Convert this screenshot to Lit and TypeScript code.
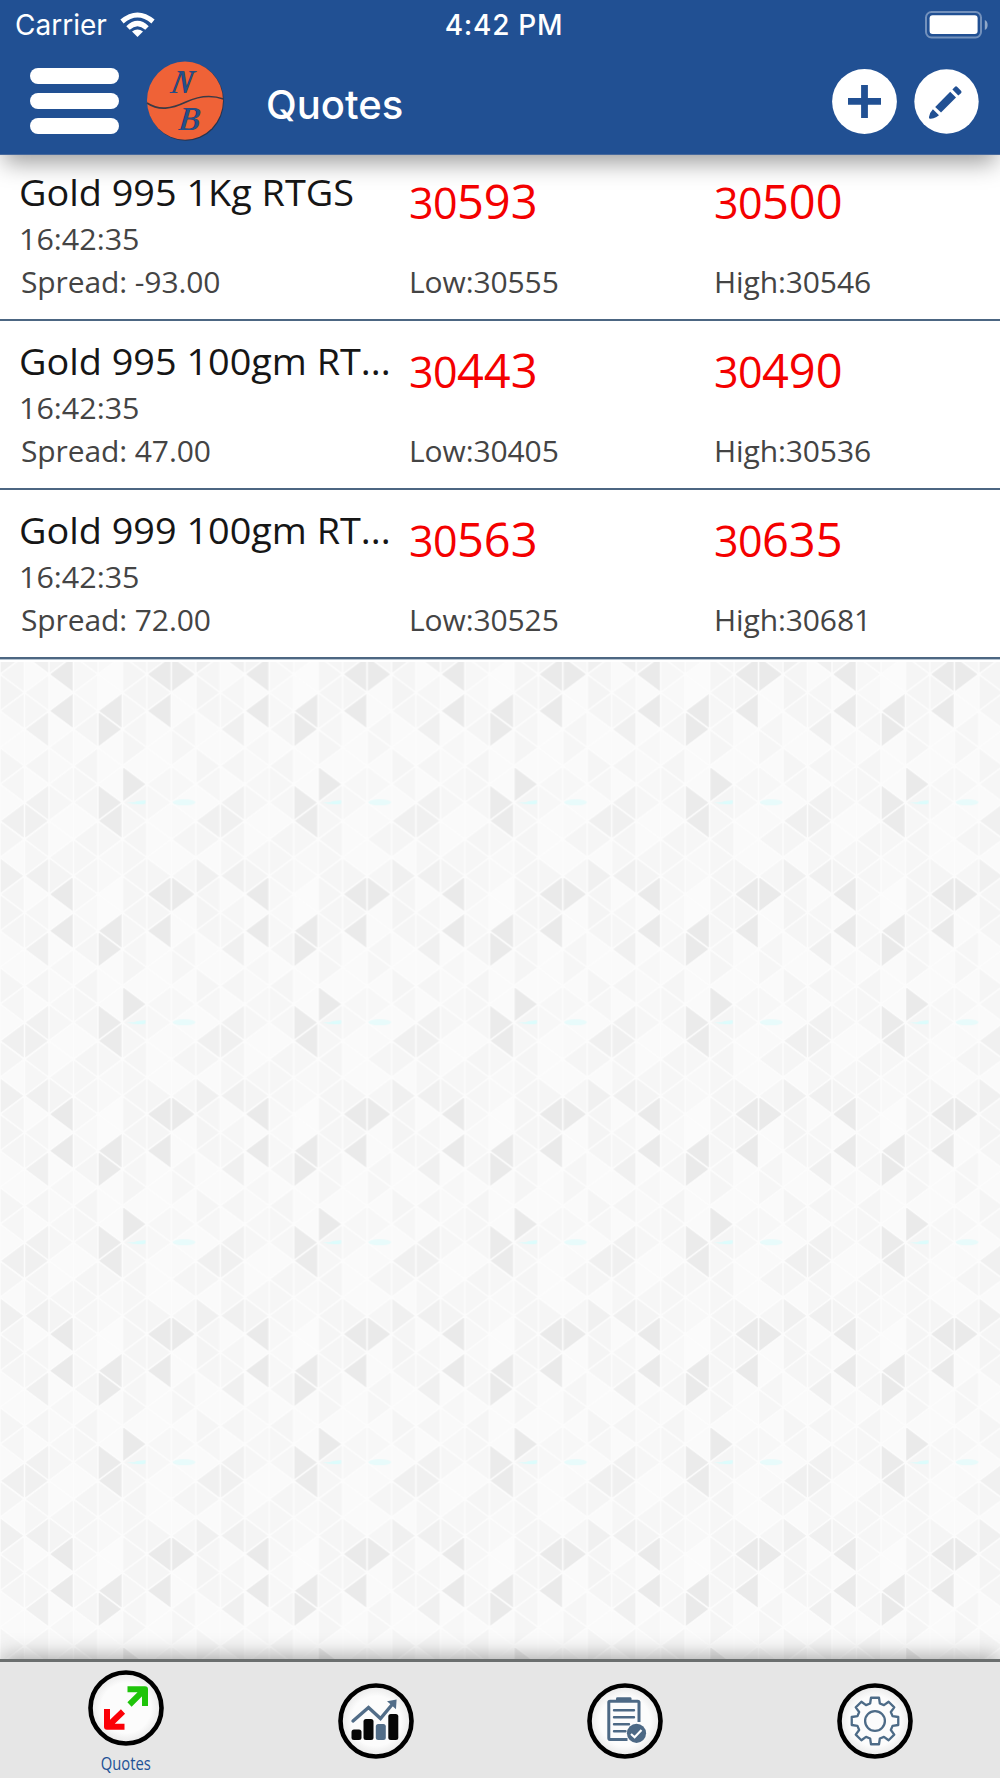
import { LitElement, html, svg, css } from "lit";
import { customElement, property } from "lit/decorators.js";

interface Quote {
  name: string;
  time: string;
  spread: string;
  bid: string;
  ask: string;
  low: string;
  high: string;
}

const QUOTES: Quote[] = [
  { name: "Gold 995 1Kg RTGS", time: "16:42:35", spread: "-93.00", bid: "30593", ask: "30500", low: "30555", high: "30546" },
  { name: "Gold 995 100gm RT...", time: "16:42:35", spread: "47.00", bid: "30443", ask: "30490", low: "30405", high: "30536" },
  { name: "Gold 999 100gm RT...", time: "16:42:35", spread: "72.00", bid: "30563", ask: "30635", low: "30525", high: "30681" },
];

// Shades of one pattern tile: 12 half rows of 8 columns, each a grey level in hex.
const SHADES = [
  "f5 fa ea f7 fb f5 ea ea",
  "f4 f6 fa f8 fb f5 f5 fa",
  "f5 f6 ea f7 ea f6 ea fa",
  "fa f0 fa f5 ea f6 fa f6",
  "fa fa f7 fa fa f5 fa f6",
  "f5 f5 f9 f5 fa fa fa fa",
  "f6 fa f7 f6 fa ea f7 f7",
  "fa f1 f6 f6 eb f5 f7 fa",
  "f0 f0 fa fa eb f6 fa f9",
  "f5 f5 fa f5 f6 f5 fa f5",
  "fa f6 f6 f6 f8 f6 fa fa",
  "f0 f0 f4 f6 f8 f5 f5 f6",
].map((r) => r.split(" "));

const CW = 24.47;
const RH = 18.33;

@customElement("triangle-backdrop")
class TriangleBackdrop extends LitElement {
  static styles = css`
    :host { display: block; }
    svg { display: block; width: 100%; height: 100%; }
  `;
  render() {
    const shapes: string[][] = [];
    for (let j = -1; j <= 12; j++) {
      for (let k = 0; k < 8; k++) {
        const g = SHADES[(j + 12) % 12][k];
        const y = j * RH;
        const left = (k + j + 12) % 2 === 0;
        const ax = left ? k * CW : (k + 1) * CW;
        const bx = left ? (k + 1) * CW : k * CW;
        shapes.push([`M${ax} ${y}L${bx} ${y - RH}V${y + RH}Z`, `#${g}${g}${g}`]);
      }
    }
    return html`<svg aria-hidden="true">
      <defs>
        <pattern id="tri" x="0" y="12.3" width=${CW * 8} height=${RH * 12} patternUnits="userSpaceOnUse">
          ${shapes.map(([d, fill]) => svg`<path d=${d} fill=${fill}/>`)}
          <path d=${shapes.map(([d]) => d).join("")} fill="none" stroke="#fcfcfc" stroke-width="1.6" stroke-linejoin="round"/>
          <path d="M126 128Q134 129 137 127L145.5 126V129.5Q135 131 126 128Z" fill="#dcfcfc"/>
          <ellipse cx="184" cy="128" rx="11.5" ry="3" fill="#e8fbfb"/>
        </pattern>
      </defs>
      <rect width="100%" height="100%" fill="url(#tri)"/>
    </svg>`;
  }
}

@customElement("quote-row")
class QuoteRow extends LitElement {
  @property({ attribute: false }) quote!: Quote;
  static styles = css`
    :host {
      display: grid;
      grid-template-columns: 409px 305px 1fr;
      box-sizing: border-box;
      height: 169px;
      background: #fff;
      border-bottom: 2px solid #4c6682;
      box-shadow: 0 1px 0 #b4c2cf;
      font-family: "Open Sans", sans-serif;
      color: #444;
      white-space: nowrap;
    }
    .col { display: flex; flex-direction: column; }
    .first { padding-left: 19px; }
    .name { font-size: 37px; line-height: 50px; padding-top: 15px; color: #161616; height: 50px; }
    .name .sq { transform: scaleX(1.022); }
    .time { font-size: 30px; line-height: 38px; height: 40px; padding-top: 3px; }
    .time .sq { transform: scaleX(1.015); }
    .small { font-size: 30px; line-height: 44px; height: 44px; }
    .spread { padding-left: 2px; letter-spacing: -0.1px; }
    .price { color: #f40000; font-size: 43px; line-height: 64px; height: 64px; padding-top: 17px; letter-spacing: -0.6px; }
    .big { font-size: 47px; letter-spacing: 0; }
    .price + .small { padding-top: 27px; letter-spacing: -0.1px; }
    .sq { display: inline-block; transform-origin: 0 50%; }
  `;
  private price(v: string) {
    return html`<div class="price">${v.slice(0, 2)}<span class="big">${v.slice(2)}</span></div>`;
  }
  render() {
    const q = this.quote;
    return html`
      <div class="col first">
        <div class="name"><span class="sq">${q.name}</span></div>
        <div class="time"><span class="sq">${q.time}</span></div>
        <div class="small spread">Spread: ${q.spread}</div>
      </div>
      <div class="col">${this.price(q.bid)}<div class="small">Low:${q.low}</div></div>
      <div class="col">${this.price(q.ask)}<div class="small">High:${q.high}</div></div>
    `;
  }
}

const gearPath = (() => {
  const pts: string[] = [];
  for (let i = 0; i < 8; i++) {
    const a = (i * Math.PI) / 4 - Math.PI / 2;
    const p = (r: number, d: number) => `${(38 + r * Math.cos(a + d)).toFixed(2)} ${(38 + r * Math.sin(a + d)).toFixed(2)}`;
    pts.push(p(18.2, -0.27), p(23.6, -0.17), p(23.6, 0.17), p(18.2, 0.27));
  }
  return "M" + pts.join("L") + "Z";
})();

@customElement("tab-bar")
class TabBar extends LitElement {
  static styles = css`
    :host {
      display: grid;
      grid-template-columns: repeat(4, 1fr);
      box-sizing: border-box;
      height: 119px;
      padding-left: 1px;
      background: #e6e6e6;
      border-top: 3px solid #6b6f6f;
      box-shadow: 0 -4px 20px -2px rgba(0, 0, 0, 0.36);
    }
    .tab { display: flex; flex-direction: column; align-items: center; padding-top: 21px; }
    .tab.active { padding-top: 8px; }
    svg { display: block; width: 76px; height: 76px; }
    .label {
      font: 18.5px/24px "Open Sans", sans-serif;
      color: #1f5296;
      transform: translateX(-0.5px) scaleX(0.8);
      margin-top: 4.5px;
    }
  `;
  private disc() {
    return svg`
      <defs><radialGradient id="disc"><stop offset="0.7" stop-color="#fcfcfc"/><stop offset="1" stop-color="#e8e8e8"/></radialGradient></defs>
      <circle cx="38" cy="38" r="35.5" fill="url(#disc)" stroke="#000" stroke-width="4.6"/>`;
  }
  render() {
    return html`
      <div class="tab active">
        <svg viewBox="0 0 76 76">
          ${this.disc()}
          <g fill="none" stroke-width="6" stroke-linejoin="round">
            <path d="M39.5 19.2H57V36M56 20.2L41.5 34.5" stroke="#1fc40a"/>
            <path d="M19 39V56.8H36.5M20 56L35 41.5" stroke="#fb0007"/>
          </g>
        </svg>
        <div class="label">Quotes</div>
      </div>
      <div class="tab">
        <svg viewBox="0 0 76 76">
          ${this.disc()}
          <g fill="#070707">
            <rect x="13.5" y="46.5" width="10" height="10.5" rx="2.5"/>
            <rect x="25.5" y="36" width="10" height="21" rx="2.5"/>
            <rect x="37.8" y="41" width="10" height="16" rx="2.5" fill="#526d88"/>
            <rect x="50.3" y="31" width="10" height="26" rx="2.5"/>
          </g>
          <path d="M15 38L30.5 24.5L42.5 35.5L55 20.5" fill="none" stroke="#526d88" stroke-width="3.4" stroke-linecap="round"/>
          <path d="M49 18.2L58.6 16.5L58 26.2Z" fill="#526d88"/>
        </svg>
      </div>
      <div class="tab">
        <svg viewBox="0 0 76 76">
          ${this.disc()}
          <g fill="none" stroke="#4d6985" stroke-width="3">
            <path d="M52 39V19.5Q52 18.2 50.5 18.2H23Q21.8 18.2 21.8 19.5V55Q21.8 56.4 23 56.4H40.5"/>
            <path d="M27 27.2H47M27 34.2H47M27 41.2H42M27 48.2H38.5" stroke-width="2.4" stroke-linecap="round"/>
          </g>
          <path d="M29 18.5V15.5Q29 14.2 30.5 14.2H43Q44.5 14.2 44.5 15.5V18.5Z" fill="#4d6985"/>
          <circle cx="49.5" cy="50.3" r="9.6" fill="#4d6985"/>
          <path d="M44 51L47.6 54.2L54.5 47" fill="none" stroke="#fff" stroke-width="2.2"/>
        </svg>
      </div>
      <div class="tab">
        <svg viewBox="0 0 76 76">
          ${this.disc()}
          <g fill="none" stroke="#4d6b87" stroke-width="2.3" stroke-linejoin="round">
            <path d=${gearPath}/>
            <circle cx="38" cy="38" r="9.9"/>
          </g>
        </svg>
      </div>
    `;
  }
}

@customElement("app-header")
class AppHeader extends LitElement {
  static styles = css`
    :host {
      display: block;
      box-sizing: border-box;
      height: 155px;
      background: #215093;
      border-bottom: 1px solid #47699d;
      color: #fff;
      font-family: Inter, sans-serif;
    }
    .status {
      display: grid;
      grid-template-columns: 1fr auto 1fr;
      align-items: center;
      height: 50px;
      padding: 0 12px 0 15px;
    }
    .carrier { display: flex; align-items: center; gap: 13px; font-size: 28px; }
    .clock { font-size: 28px; font-weight: 500; letter-spacing: 0.7px; padding-left: 5px; }
    .battery { justify-self: end; }
    svg { display: block; }
    .nav { display: flex; align-items: center; height: 102px; padding: 0 21px 0 30px; }
    .burger { display: flex; flex-direction: column; gap: 9px; width: 89px; }
    .line { height: 16.2px; border-radius: 8px; background: #fff; }
    .logo { margin-left: 26px; }
    .mark { font: italic 29px "Liberation Serif", serif; }
    .title { flex: 1; margin: 8px 0 0 41px; font-size: 40px; font-weight: 500; line-height: 48px; }
    .action { margin-left: 17px; }
  `;
  render() {
    return html`
      <div class="status">
        <div class="carrier">
          <span>Carrier</span>
          <svg width="35" height="26" viewBox="0 0 35 26">
            <g fill="none" stroke="#fff" stroke-width="5">
              <path d="M2 9.5Q17.5 -3.5 33 9.5"/>
              <path d="M8 16Q17.5 7 27 16"/>
            </g>
            <path d="M12 19.5Q17.5 15.5 23 19.5L17.5 25Z" fill="#fff"/>
          </svg>
        </div>
        <div class="clock">4:42 PM</div>
        <svg class="battery" width="63" height="28" viewBox="0 0 63 28">
          <rect x="1" y="1" width="55" height="25.5" rx="5.5" fill="none" stroke="#7391bc" stroke-width="2"/>
          <rect x="4.6" y="4.3" width="48" height="18.7" rx="3" fill="#fff"/>
          <path d="M59.8 9Q62.6 10 62.6 14T59.8 19Z" fill="#90a8c9"/>
        </svg>
      </div>
      <div class="nav">
        <div class="burger"><div class="line"></div><div class="line"></div><div class="line"></div></div>
        <svg class="logo" width="80" height="82" viewBox="0 0 80 82">
          <ellipse cx="40.8" cy="41.4" rx="38" ry="39.4" fill="#27344e"/>
          <ellipse cx="40" cy="40.6" rx="38" ry="39.2" fill="#ef6237"/>
          <path d="M2 43C14 51 26 49 41 42S67 35 78.5 39" fill="none" stroke="#3c3a45" stroke-width="1.7"/>
          <g class="mark" text-anchor="middle">
            <g transform="translate(35 32.5) skewX(-12) scale(1.05 1.15)">
              <text fill="#202b45">N</text>
              <text x="0.8" y="0.5" fill="#24508b">N</text>
            </g>
            <g transform="translate(43 69.5) skewX(-6) scale(1.15 1.15)">
              <text fill="#202b45">B</text>
              <text x="0.8" y="0.5" fill="#24508b">B</text>
            </g>
          </g>
        </svg>
        <div class="title">Quotes</div>
        <svg class="action" width="65" height="65" viewBox="0 0 65 65">
          <circle cx="32.5" cy="32.5" r="32.4" fill="#fff"/>
          <path d="M16 32.4H49M32.5 16V49" stroke="#215093" stroke-width="6.8"/>
        </svg>
        <svg class="action" width="65" height="65" viewBox="0 0 65 65">
          <circle cx="32.5" cy="32.5" r="32.2" fill="#fff"/>
          <g fill="#215093">
            <path d="M36.2 22.8L42 28.6L27 43.6L21.2 38Z"/>
            <path d="M38.4 20.6L40.8 18Q42 16.7 43.3 18L47 21.7Q48.2 23 47 24.2L44.3 26.6Z"/>
            <path d="M18.9 40.3L25 46.2L22.5 48Q19 50 16 49.7Q14.6 49.6 15 48Q15.4 44 18.9 40.3Z"/>
          </g>
        </svg>
      </div>
    `;
  }
}

@customElement("app-root")
class AppRoot extends LitElement {
  static styles = css`
    :host {
      display: flex;
      flex-direction: column;
      height: 1778px;
      overflow: hidden;
      background: #fff;
    }
    app-header, tab-bar { position: relative; z-index: 1; flex: none; }
    app-header { box-shadow: 0 12px 22px -4px rgba(0, 0, 0, 0.38); }
    .list { display: flow-root; flex: none; margin-top: -3px; padding-bottom: 3px; }
    triangle-backdrop { flex: 1; min-height: 0; }
  `;
  render() {
    return html`
      <app-header></app-header>
      <div class="list">${QUOTES.map((q) => html`<quote-row .quote=${q}></quote-row>`)}</div>
      <triangle-backdrop></triangle-backdrop>
      <tab-bar></tab-bar>
    `;
  }
}
